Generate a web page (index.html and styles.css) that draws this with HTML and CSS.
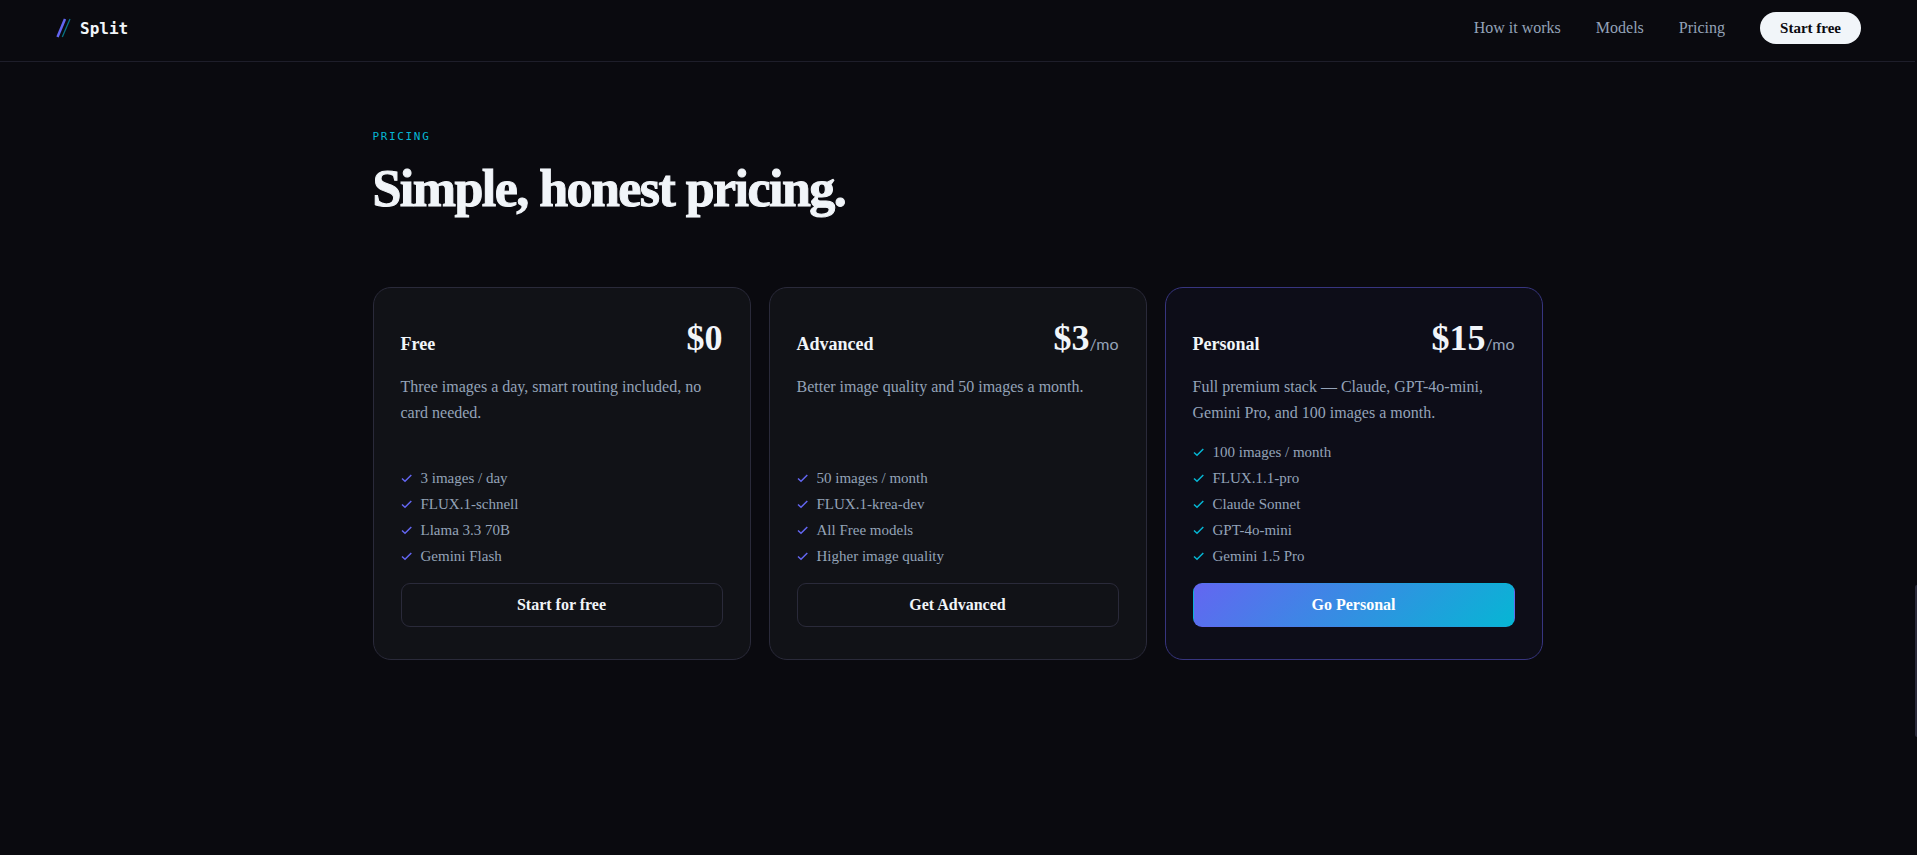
FILE: index.html
```html
<!DOCTYPE html>
<html lang="en">
<head>
    <meta charset="UTF-8">
    <meta name="viewport" content="width=device-width, initial-scale=1.0">
    <title>Split - Pricing</title>
    <link rel="stylesheet" href="styles.css">
</head>
<body>
    <svg class="sprite" aria-hidden="true">
        <symbol id="check" viewBox="0 0 12 12">
            <path d="M1 6.5L4 9.3L10.3 3" fill="none" stroke="currentColor" stroke-width="1.5"/>
        </symbol>
    </svg>

    <header class="nav">
        <a class="logo" href="#">
            <svg width="20" height="22" viewBox="0 0 20 22" aria-hidden="true">
                <line x1="3.5" y1="20" x2="11" y2="2" stroke="#6366f1" stroke-width="2.5"/>
                <line x1="8.3" y1="20" x2="16" y2="2" stroke="#06b6d4" stroke-width="1.3" opacity="0.6"/>
            </svg>
            <span>Split</span>
        </a>
        <nav class="nav-links">
            <a href="#how">How it works</a>
            <a href="#models">Models</a>
            <a href="#pricing">Pricing</a>
            <a class="nav-cta" href="#start">Start free</a>
        </nav>
    </header>

    <main class="pricing" id="pricing">
        <p class="label">PRICING</p>
        <h1>Simple, honest pricing.</h1>

        <div class="plans">
            <section class="plan">
                <div class="plan-head">
                    <h2>Free</h2>
                    <div class="price">$0</div>
                </div>
                <p class="desc">Three images a day, smart routing included, no card needed.</p>
                <ul class="features">
                    <li><svg><use href="#check"/></svg>3 images / day</li>
                    <li><svg><use href="#check"/></svg>FLUX.1-schnell</li>
                    <li><svg><use href="#check"/></svg>Llama 3.3 70B</li>
                    <li><svg><use href="#check"/></svg>Gemini Flash</li>
                </ul>
                <button type="button">Start for free</button>
            </section>

            <section class="plan">
                <div class="plan-head">
                    <h2>Advanced</h2>
                    <div class="price">$3<span>/mo</span></div>
                </div>
                <p class="desc">Better image quality and 50 images a month.</p>
                <ul class="features">
                    <li><svg><use href="#check"/></svg>50 images / month</li>
                    <li><svg><use href="#check"/></svg>FLUX.1-krea-dev</li>
                    <li><svg><use href="#check"/></svg>All Free models</li>
                    <li><svg><use href="#check"/></svg>Higher image quality</li>
                </ul>
                <button type="button">Get Advanced</button>
            </section>

            <section class="plan featured">
                <div class="plan-head">
                    <h2>Personal</h2>
                    <div class="price">$15<span>/mo</span></div>
                </div>
                <p class="desc">Full premium stack — Claude, GPT-4o-mini, Gemini Pro, and 100 images a month.</p>
                <ul class="features">
                    <li><svg><use href="#check"/></svg>100 images / month</li>
                    <li><svg><use href="#check"/></svg>FLUX.1.1-pro</li>
                    <li><svg><use href="#check"/></svg>Claude Sonnet</li>
                    <li><svg><use href="#check"/></svg>GPT-4o-mini</li>
                    <li><svg><use href="#check"/></svg>Gemini 1.5 Pro</li>
                </ul>
                <button type="button">Go Personal</button>
            </section>
        </div>
    </main>

    <div class="scroll-thumb"></div>
</body>
</html>
```

FILE: styles.css
```css
* {
    box-sizing: border-box;
    margin: 0;
    padding: 0;
}
body {
    min-height: 100vh;
    padding-right: 2px;
    background: #0a0a0f;
    color: #f1f5f9;
    font-family: "Liberation Serif", "Times New Roman", serif;
    font-size: 16px;
}
a {
    color: inherit;
    text-decoration: none;
}
.sprite {
    display: none;
}

/* Nav */
.nav {
    display: flex;
    align-items: center;
    justify-content: space-between;
    padding: 12px 54px 17px;
    border-bottom: 1px solid #1e1e2a;
}
.logo {
    display: flex;
    align-items: center;
    gap: 6px;
    font-family: "DejaVu Sans Mono", monospace;
    font-weight: bold;
}
.nav-links {
    display: flex;
    align-items: center;
    gap: 35px;
    color: #94a3b8;
}
.nav-cta {
    padding: 0 20px;
    border-radius: 16px;
    background: #f1f5f9;
    color: #0a0a0f;
    font-size: 15px;
    font-weight: bold;
    line-height: 32px;
}

/* Pricing */
.pricing {
    max-width: 1170px;
    margin: 0 auto;
    padding: 67px 0;
}
.label {
    color: #06b6d4;
    font-family: "DejaVu Sans Mono", monospace;
    font-size: 11px;
    line-height: 16px;
    letter-spacing: 0.15em;
}
h1 {
    margin: 14px 0 68px;
    font-size: 52px;
    line-height: 60px;
    letter-spacing: -0.03em;
    -webkit-text-stroke: 1px #f1f5f9;
}
.plans {
    display: grid;
    grid-template-columns: repeat(3, 1fr);
    gap: 18px;
}
.plan {
    display: flex;
    flex-direction: column;
    padding: 32px 27px;
    border: 1px solid #2a2a3a;
    border-radius: 18px;
    background: #111217;
}
.plan-head {
    display: flex;
    align-items: baseline;
    justify-content: space-between;
    margin-bottom: 18px;
}
h2 {
    font-size: 18px;
    line-height: 20px;
}
.price {
    font-size: 36px;
    font-weight: bold;
    line-height: 36px;
}
.price span {
    color: #94a3b8;
    font-family: Lato, sans-serif;
    font-size: 16px;
    font-weight: 400;
    line-height: 16px;
}
.desc {
    margin-bottom: 13px;
    color: #94a3b8;
    line-height: 26px;
}
.features {
    margin-top: auto;
    margin-bottom: 14px;
    color: #94a3b8;
    font-size: 15px;
    line-height: 26px;
    list-style: none;
}
.features li {
    display: flex;
    align-items: center;
    gap: 8px;
}
.features svg {
    width: 12px;
    height: 12px;
    color: #6366f1;
}
button {
    height: 44px;
    border: 1px solid #2a2a3a;
    border-radius: 9px;
    background: transparent;
    color: #f1f5f9;
    font-family: inherit;
    font-size: 16px;
    font-weight: bold;
    cursor: pointer;
}
.featured {
    border-color: #37357f;
    background: #0d0d18;
}
.featured .features svg {
    color: #06b6d4;
}
.featured button {
    border-color: transparent;
    background: linear-gradient(135deg, #6366f1, #06b6d4);
    color: #fff;
}

.scroll-thumb {
    position: fixed;
    top: 585px;
    right: 0;
    width: 2px;
    height: 152px;
    border-radius: 2px 0 0 2px;
    background: #2a2a3a;
}
```
